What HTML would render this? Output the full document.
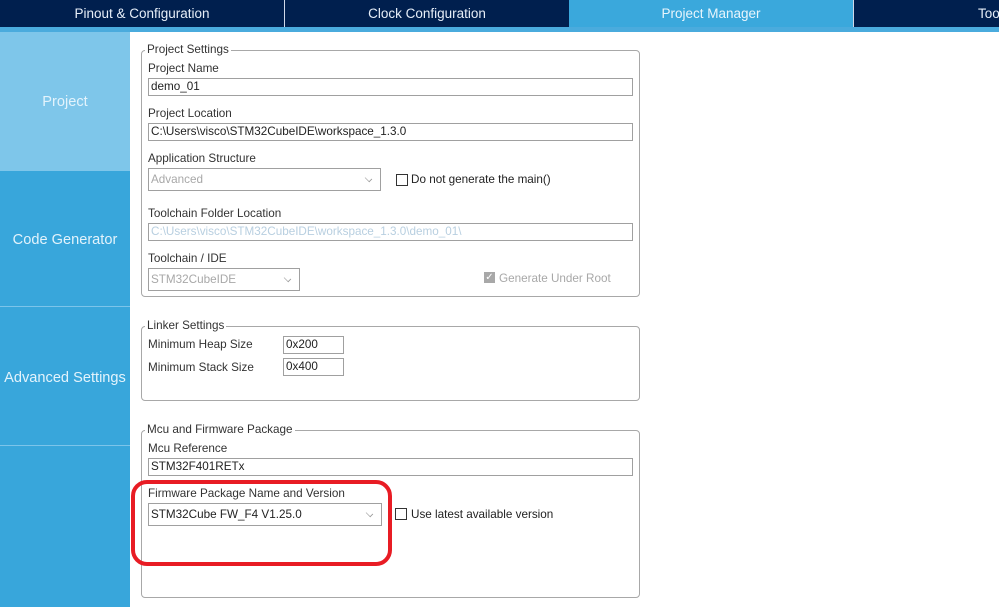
<!DOCTYPE html>
<html><head><meta charset="utf-8"><style>
*{margin:0;padding:0;box-sizing:border-box}
body{width:999px;height:607px;overflow:hidden;background:#fff;font-family:"Liberation Sans",Arial,sans-serif;font-size:11.7px;color:#222;position:relative}
.a{position:absolute}
.top{left:0;top:0;width:999px;height:27px;background:#001f4e}
.tab{top:0;height:27px;color:#e6eef8;font-size:13.5px;line-height:28px;text-align:center}
.strip{left:0;top:27px;width:999px;height:5px;background:#4aabdd}
.side{left:0;top:32px;width:130px;height:575px;background:#38a6db}
.si{left:0;width:130px;color:#e3f3fc;font-size:14.6px;text-align:center}
.sep{left:0;width:130px;height:1px;background:#7cc4ea}
.fs{border:1px solid #a8a8a8;border-radius:4px}
.lg{background:#fff;padding:0 2px;color:#333}
.lbl{color:#333}
.in{border:1px solid #a0a0a0;height:18px;line-height:16px;padding-left:2px;background:#fff}
.dis{color:#a8a8a8}
.chev{position:absolute;right:8px;top:4px;width:7px;height:7px;border-right:1px solid #999;border-bottom:1px solid #999;transform:rotate(45deg) scale(.9,.6)}
.cb{width:12px;height:12px;border:1px solid #333;background:#fff}
</style></head><body>
<div class="a top"></div>
<div class="a tab" style="left:0;width:284px">Pinout &amp; Configuration</div>
<div class="a" style="left:284px;top:0;width:1px;height:27px;background:#d0d8e8"></div>
<div class="a tab" style="left:285px;width:284px">Clock Configuration</div>
<div class="a tab" style="left:569px;width:284px;background:#3aa8dc;color:#e8f5fc">Project Manager</div>
<div class="a" style="left:853px;top:0;width:1px;height:27px;background:#d0d8e8"></div>
<div class="a tab" style="left:978px;width:60px;text-align:left">Tools</div>
<div class="a strip"></div>
<div class="a side"></div>
<div class="a" style="left:0;top:32px;width:130px;height:139px;background:#7ec6ea"></div>
<div class="a si" style="top:94px">Project</div>
<div class="a si" style="top:232px">Code Generator</div>
<div class="a sep" style="top:306px"></div>
<div class="a si" style="top:370px">Advanced Settings</div>
<div class="a sep" style="top:445px"></div>

<div class="a fs" style="left:141px;top:50px;width:499px;height:247px"></div>
<div class="a lg" style="left:145px;top:43px">Project Settings</div>
<div class="a lbl" style="left:148px;top:62px">Project Name</div>
<div class="a in" style="left:148px;top:78px;width:485px">demo_01</div>
<div class="a lbl" style="left:148px;top:107px">Project Location</div>
<div class="a in" style="left:148px;top:123px;width:485px">C:\Users\visco\STM32CubeIDE\workspace_1.3.0</div>
<div class="a lbl" style="left:148px;top:152px">Application Structure</div>
<div class="a in dis" style="left:148px;top:168px;width:233px;height:23px;line-height:21px">Advanced<span class="chev" style="top:6px"></span></div>
<div class="a cb" style="left:396px;top:174px"></div>
<div class="a" style="left:411px;top:173px">Do not generate the main()</div>
<div class="a lbl" style="left:148px;top:207px">Toolchain Folder Location</div>
<div class="a in" style="left:148px;top:223px;width:485px;color:#b8cfe0">C:\Users\visco\STM32CubeIDE\workspace_1.3.0\demo_01\</div>
<div class="a lbl" style="left:148px;top:252px">Toolchain / IDE</div>
<div class="a in dis" style="left:148px;top:268px;width:152px;height:23px;line-height:21px">STM32CubeIDE<span class="chev" style="top:6px"></span></div>
<div class="a" style="left:484px;top:272px;width:11px;height:11px;background:#a8a8a8;color:#fff;font-size:10px;line-height:11px;text-align:center">✓</div>
<div class="a dis" style="left:499px;top:272px">Generate Under Root</div>

<div class="a fs" style="left:141px;top:326px;width:499px;height:75px"></div>
<div class="a lg" style="left:145px;top:319px">Linker Settings</div>
<div class="a lbl" style="left:148px;top:338px">Minimum Heap Size</div>
<div class="a in" style="left:283px;top:336px;width:61px">0x200</div>
<div class="a lbl" style="left:148px;top:361px">Minimum Stack Size</div>
<div class="a in" style="left:283px;top:358px;width:61px">0x400</div>

<div class="a fs" style="left:141px;top:430px;width:499px;height:168px"></div>
<div class="a lg" style="left:145px;top:423px">Mcu and Firmware Package</div>
<div class="a lbl" style="left:148px;top:442px">Mcu Reference</div>
<div class="a in" style="left:148px;top:458px;width:485px">STM32F401RETx</div>
<div class="a lbl" style="left:148px;top:487px">Firmware Package Name and Version</div>
<div class="a in" style="left:148px;top:503px;width:234px;height:23px;line-height:21px">STM32Cube FW_F4 V1.25.0<span class="chev" style="top:6px"></span></div>
<div class="a cb" style="left:395px;top:508px"></div>
<div class="a" style="left:411px;top:508px">Use latest available version</div>
<div class="a" style="left:131px;top:480px;width:261px;height:86px;border:4.5px solid #e81c24;border-radius:16px"></div>
</body></html>
